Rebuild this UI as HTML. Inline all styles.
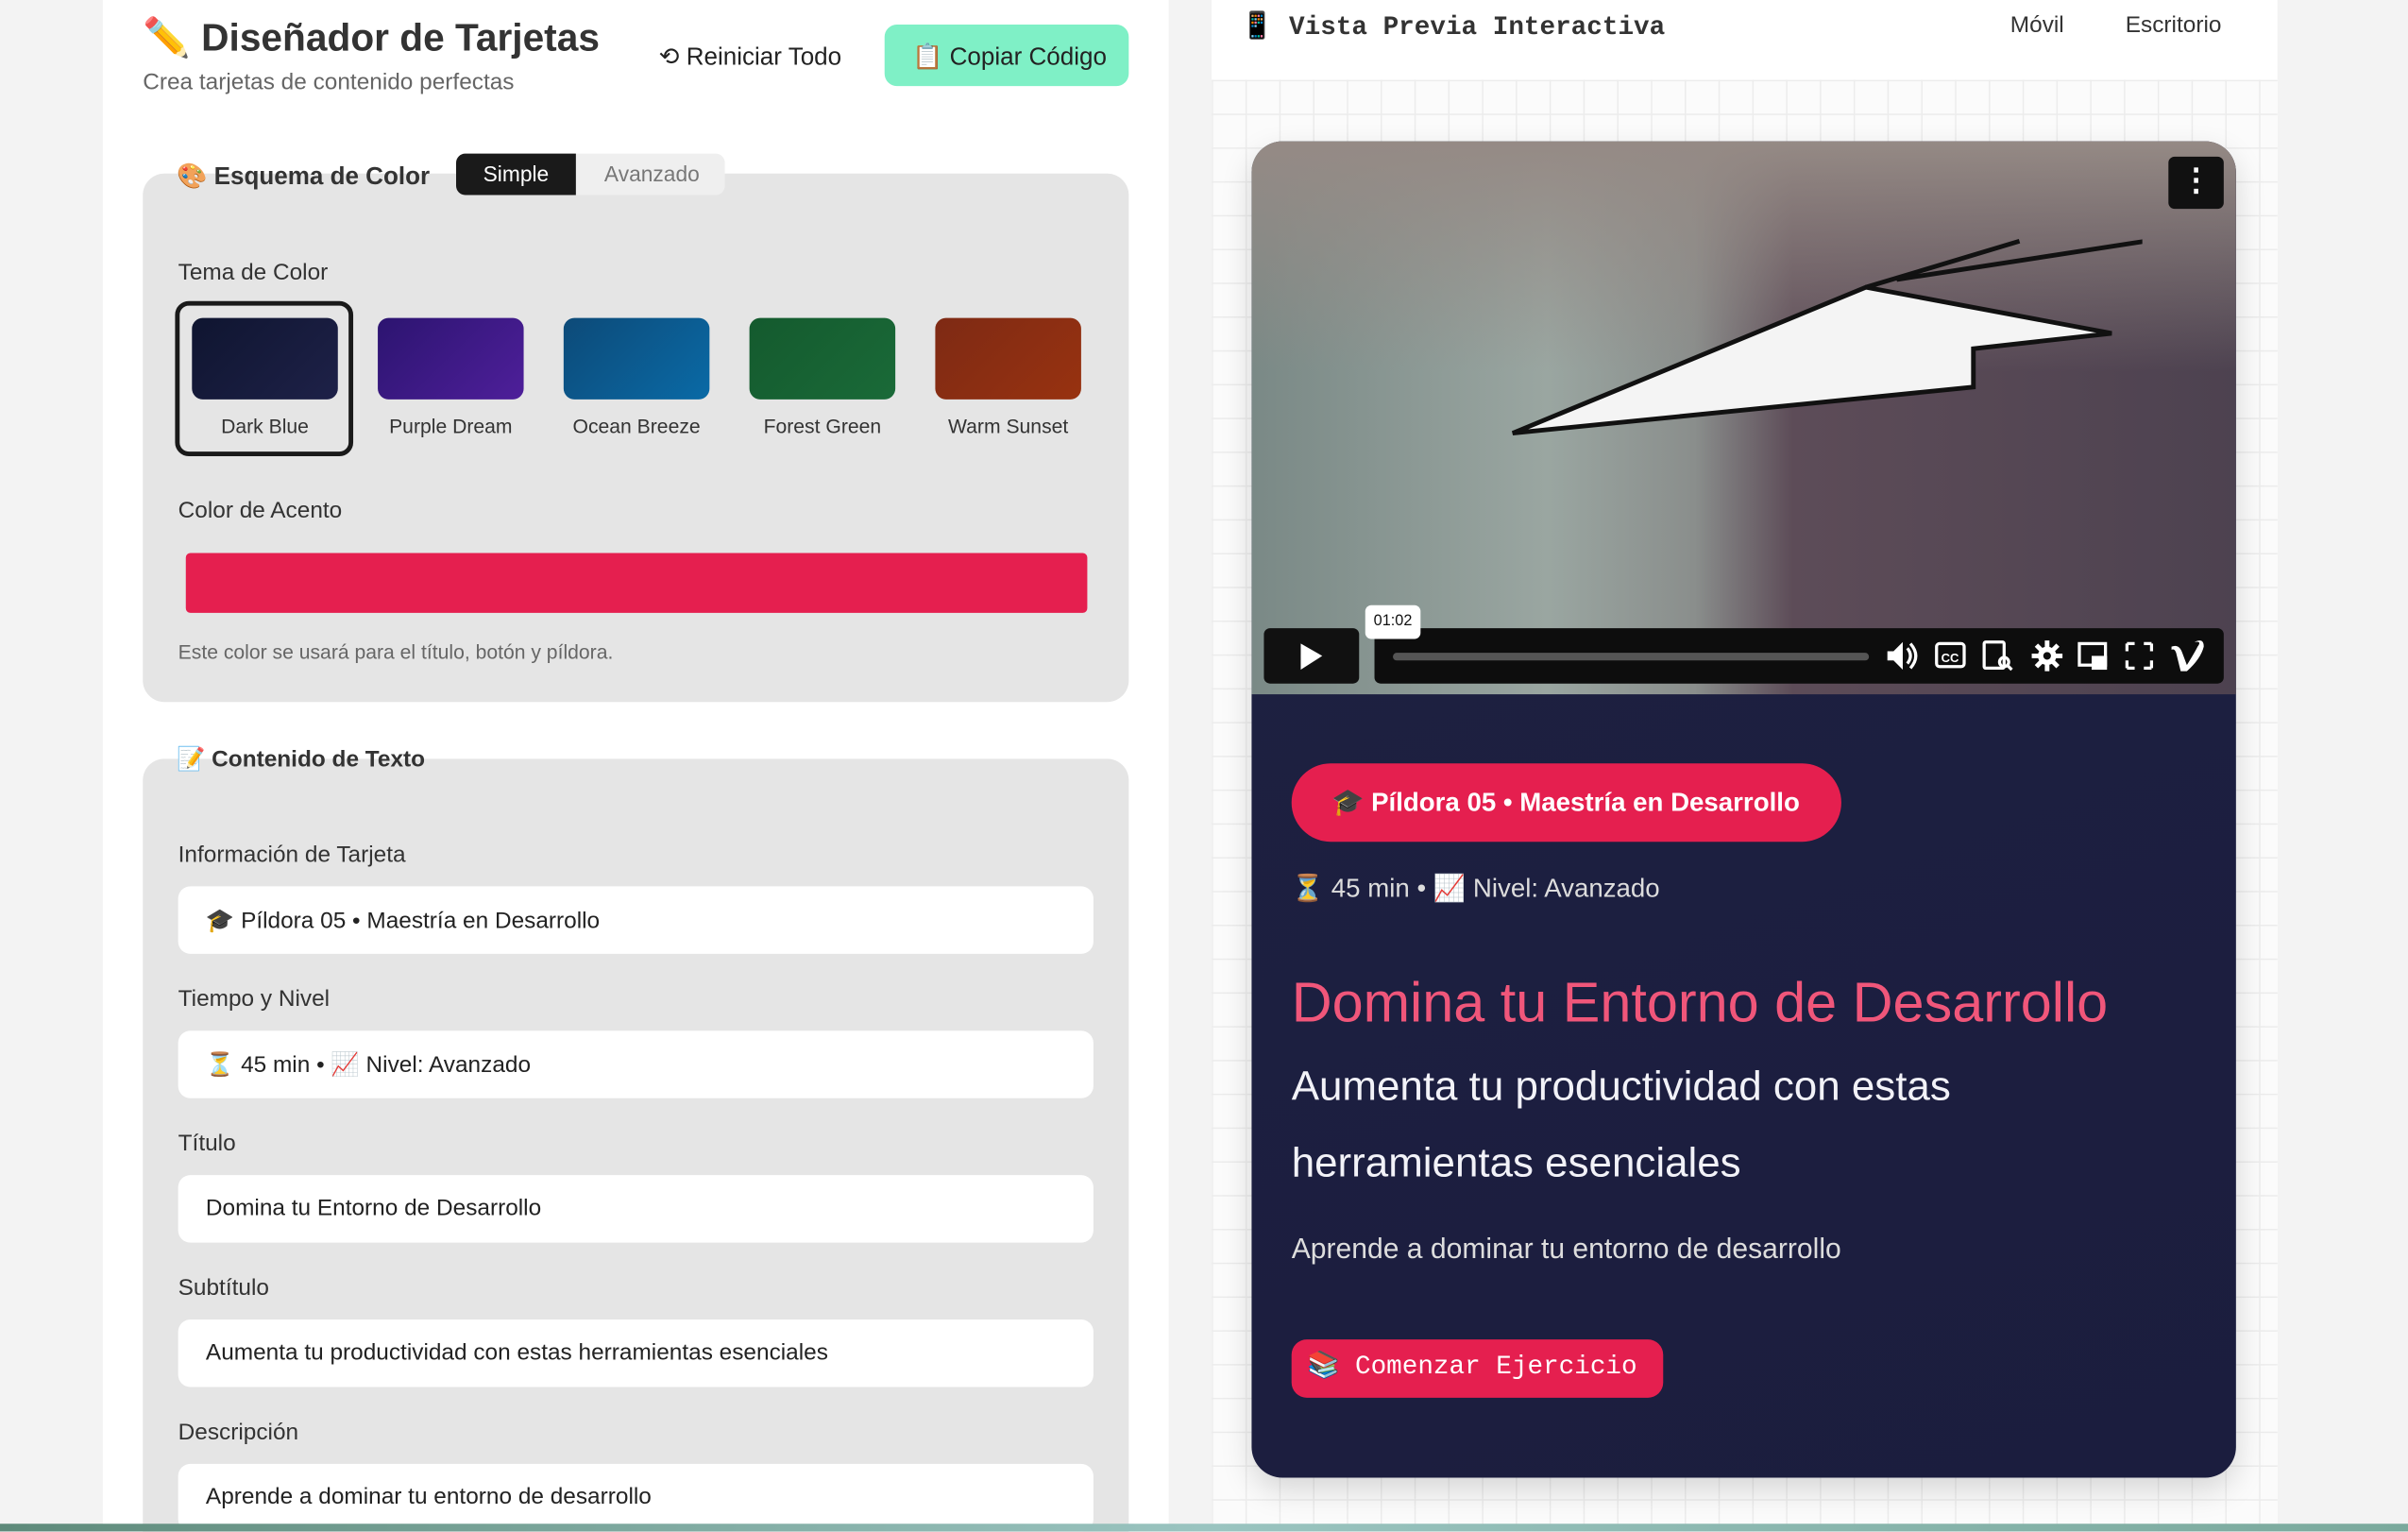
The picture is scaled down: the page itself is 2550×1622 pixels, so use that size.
<!DOCTYPE html>
<html><head><meta charset="utf-8"><style>
*{box-sizing:border-box;margin:0;padding:0}
html,body{width:2550px;height:1622px;overflow:hidden;background:#f3f3f3}
#w{width:1568px;height:997px;transform:scale(1.62628);transform-origin:0 0;position:relative;font-family:"Liberation Sans","Noto Sans CJK JP",sans-serif;color:#222}
.a{position:absolute}
.left{left:67px;top:0;width:694px;height:997px;background:#fff}
.right{left:789px;top:0;width:694px;height:997px;background:#fff}
.grid{left:789px;top:52px;width:694px;height:945px;background-color:#fbfbfb;background-image:linear-gradient(#ececec 1px,transparent 1px),linear-gradient(90deg,#ececec 1px,transparent 1px);background-size:22px 22px}
.sec{background:#e5e5e5;border-radius:14px}
.lbl{font-size:15px;color:#333}
.sw{width:95px;height:53px;border-radius:7px}
.swl{font-size:13px;color:#333;width:121px;text-align:center}
.inp{left:116px;width:596px;height:44px;background:#fff;border-radius:8px;font-size:15px;padding:13px 18px;color:#222}
.mono{font-family:"Liberation Mono",monospace}
</style></head><body><div id="w">
<div class="a left"></div>
<div class="a right"></div>
<div class="a grid"></div>

<div class="a" style="left:93px;top:11px;font-size:25px;font-weight:bold;color:#333">✏️ Diseñador de Tarjetas</div>
<div class="a" style="left:93px;top:45px;font-size:15px;color:#666">Crea tarjetas de contenido perfectas</div>
<div class="a" style="left:429px;top:27px;font-size:16px;color:#222">⟲ Reiniciar Todo</div>
<div class="a" style="left:576px;top:16px;width:159px;height:40px;background:#7ff0c6;border-radius:8px;font-size:16px;padding:11px 0 0 18px;color:#222">📋 Copiar Código</div>

<div class="a sec" style="left:93px;top:113px;width:642px;height:344px"></div>
<div class="a" style="left:115px;top:105px;font-size:16px;font-weight:bold;color:#333">🎨 Esquema de Color</div>
<div class="a" style="left:297px;top:100px;width:175px;height:27px;background:#efefef;border-radius:6px"></div>
<div class="a" style="left:297px;top:100px;width:78px;height:27px;background:#1a1a1a;border-radius:6px 0 0 6px;color:#fff;font-size:14px;text-align:center;line-height:27px">Simple</div>
<div class="a" style="left:377px;top:100px;width:95px;height:27px;color:#777;font-size:14px;text-align:center;line-height:27px">Avanzado</div>
<div class="a lbl" style="left:116px;top:169px">Tema de Color</div>
<div class="a" style="left:114px;top:196px;width:116px;height:101px;border:3px solid #1a1a1a;border-radius:9px"></div>
<div class="a sw" style="left:125px;top:207px;background:linear-gradient(135deg,#0f1530,#1e2148)"></div>
<div class="a sw" style="left:246px;top:207px;background:linear-gradient(135deg,#2c1470,#4e1f9a)"></div>
<div class="a sw" style="left:367px;top:207px;background:linear-gradient(135deg,#0d4a78,#0a6aa6)"></div>
<div class="a sw" style="left:488px;top:207px;background:linear-gradient(135deg,#145a2e,#1a6a38)"></div>
<div class="a sw" style="left:609px;top:207px;background:linear-gradient(135deg,#7e2a14,#983210)"></div>
<div class="a swl" style="left:112px;top:270px">Dark Blue</div>
<div class="a swl" style="left:233px;top:270px">Purple Dream</div>
<div class="a swl" style="left:354px;top:270px">Ocean Breeze</div>
<div class="a swl" style="left:475px;top:270px">Forest Green</div>
<div class="a swl" style="left:596px;top:270px">Warm Sunset</div>
<div class="a lbl" style="left:116px;top:324px">Color de Acento</div>
<div class="a" style="left:121px;top:360px;width:587px;height:39px;background:#e51f4f;border-radius:3px"></div>
<div class="a" style="left:116px;top:417px;font-size:13px;color:#666">Este color se usará para el título, botón y píldora.</div>

<div class="a sec" style="left:93px;top:494px;width:642px;height:520px"></div>
<div class="a" style="left:115px;top:485px;font-size:15px;font-weight:bold;color:#333">📝 Contenido de Texto</div>
<div class="a lbl" style="left:116px;top:548px">Información de Tarjeta</div>
<div class="a inp" style="top:577px">🎓 Píldora 05 • Maestría en Desarrollo</div>
<div class="a lbl" style="left:116px;top:642px">Tiempo y Nivel</div>
<div class="a inp" style="top:671px">⏳ 45 min • 📈 Nivel: Avanzado</div>
<div class="a lbl" style="left:116px;top:736px">Título</div>
<div class="a inp" style="top:765px">Domina tu Entorno de Desarrollo</div>
<div class="a lbl" style="left:116px;top:830px">Subtítulo</div>
<div class="a inp" style="top:859px">Aumenta tu productividad con estas herramientas esenciales</div>
<div class="a lbl" style="left:116px;top:924px">Descripción</div>
<div class="a inp" style="top:953px">Aprende a dominar tu entorno de desarrollo</div>

<div class="a mono" style="left:808px;top:7px;font-size:17px;font-weight:bold;color:#333">📱 Vista Previa Interactiva</div>
<div class="a" style="left:1309px;top:8px;font-size:15px;color:#333">Móvil</div>
<div class="a" style="left:1384px;top:8px;font-size:15px;color:#333">Escritorio</div>

<div class="a" style="left:815px;top:92px;width:641px;height:870px;border-radius:20px;overflow:hidden;background:linear-gradient(160deg,#1e2142,#1b1d3e);box-shadow:0 8px 20px rgba(0,0,0,.15)">
 <div class="a" style="left:0;top:0;width:641px;height:360px;background:linear-gradient(90deg,#7a8986 0%,#9aa6a1 30%,#8a8e8c 45%,#5d4c58 55%,#4d4250 100%)">
  <div class="a" style="left:0;top:0;width:641px;height:150px;background:linear-gradient(180deg,#958a85,rgba(149,138,133,0))"></div>
  <svg class="a" style="left:160px;top:55px" width="420" height="140" viewBox="0 0 420 140"><polygon points="10,135 240,40 400,70 310,80 310,105" fill="#f4f4f4" stroke="#111" stroke-width="3"/><path d="M240 40 L340 10 M260 35 L435 8" stroke="#111" stroke-width="3"/></svg>
  <div class="a" style="left:597px;top:10px;width:36px;height:34px;background:#111;border-radius:4px;color:#fff;text-align:center;font-size:20px;line-height:32px;font-weight:bold">⋮</div>
  <div class="a" style="left:8px;top:317px;width:62px;height:36px;background:#111;border-radius:4px"><svg width="62" height="36"><polygon points="24,10 24,27 38,18" fill="#fff"/></svg></div>
  <div class="a" style="left:80px;top:317px;width:553px;height:36px;background:#0d0d0d;border-radius:4px">
   <div class="a" style="left:12px;top:16px;width:310px;height:5px;background:#555;border-radius:3px"></div>
   <svg class="a" style="left:330px;top:6px" width="220" height="24" viewBox="0 0 220 24" fill="#fff">
    <polygon points="4,9 8,9 14,3 14,21 8,15 4,15"/><path d="M17 7 Q21 12 17 17 M19 4 Q26 12 19 20" stroke="#fff" stroke-width="2" fill="none"/>
    <rect x="36" y="4" width="18" height="15" rx="2" fill="none" stroke="#fff" stroke-width="2"/><text x="39" y="16" font-size="8" font-weight="bold" font-family="Liberation Sans">CC</text>
    <rect x="67" y="3" width="13" height="17" rx="1" fill="none" stroke="#fff" stroke-width="2"/><circle cx="80" cy="16" r="3" fill="none" stroke="#fff" stroke-width="2"/><path d="M82 18 L85 21" stroke="#fff" stroke-width="2"/>
    <circle cx="108" cy="12" r="6"/><circle cx="108" cy="12" r="2" fill="#0d0d0d"/><path d="M108 2 V22 M98 12 H118 M101 5 L115 19 M115 5 L101 19" stroke="#fff" stroke-width="3"/><circle cx="108" cy="12" r="2.5" fill="#0d0d0d"/>
    <rect x="129" y="4" width="17" height="14" fill="none" stroke="#fff" stroke-width="2"/><rect x="137" y="12" width="10" height="9"/>
    <path d="M160 4 h5 M160 4 v5 M176 4 h-5 M176 4 v5 M160 20 h5 M160 20 v-5 M176 20 h-5 M176 20 v-5" stroke="#fff" stroke-width="2"/>
    <path d="M189 6 Q194 4 196 10 L199 18 Q204 10 206 6 Q209 2 204 3 Q210 0 210 6 Q208 14 199 22 L195 22 L192 10 Q191 7 189 8 Z"/>
   </svg>
  </div>
  <div class="a" style="left:74px;top:302px;width:36px;height:22px;background:#fff;border-radius:4px;font-size:10px;text-align:center;line-height:22px;color:#111">01:02</div>
 </div>
 <div class="a" style="left:26px;top:405px;width:358px;height:51px;background:#e51f4f;border-radius:26px;color:#fff;font-weight:bold;font-size:17px;line-height:51px;padding-left:26px">🎓 Píldora 05 • Maestría en Desarrollo</div>
 <div class="a" style="left:26px;top:477px;color:#ddd;font-size:17px">⏳ 45 min • 📈 Nivel: Avanzado</div>
 <div class="a" style="left:26px;top:540px;color:#f0567a;font-size:36.5px;white-space:nowrap">Domina tu Entorno de Desarrollo</div>
 <div class="a" style="left:26px;top:590px;color:#f2f2f8;font-size:27px;line-height:50px;width:520px">Aumenta tu productividad con estas herramientas esenciales</div>
 <div class="a" style="left:26px;top:710px;color:#ddd;font-size:18.5px">Aprende a dominar tu entorno de desarrollo</div>
 <div class="a mono" style="left:26px;top:780px;width:242px;height:38px;background:#e51f4f;border-radius:10px;color:#fff;font-size:17px;line-height:38px;padding-left:10px">📚 Comenzar Ejercicio</div>
</div>
<div class="a" style="left:0;top:992px;width:1568px;height:5px;background:linear-gradient(90deg,#5e8a7a,#9ac4c0,#7aa99c)"></div>
</div></body></html>
